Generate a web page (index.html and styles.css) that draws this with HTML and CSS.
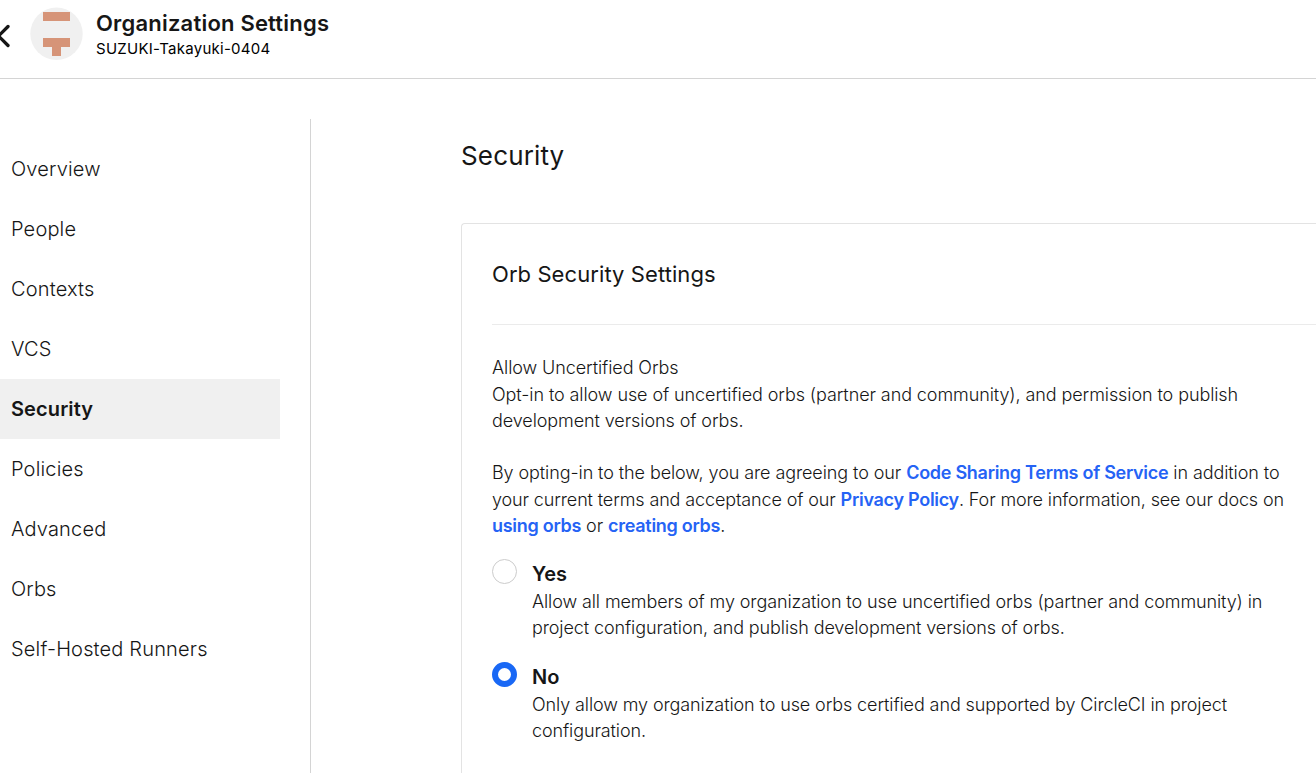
FILE: index.html
```html
<!DOCTYPE html>
<html lang="en">
<head>
<meta charset="utf-8">
<title>Organization Settings</title>
<link rel="stylesheet" href="styles.css">
</head>
<body>
<header class="topbar">
  <svg class="back" width="12" height="28" viewBox="0 0 12 28" fill="none" stroke="#161616" stroke-width="3.3" stroke-linecap="round"><path d="M8 4.5L-1.5 14L8 23.5"/></svg>
  <svg class="avatar" width="53" height="53" viewBox="0 0 53 53"><circle cx="26.5" cy="26.8" r="26.2" fill="#f0f0f0"/><path fill="#d69478" d="M13 5h27v9H13zM13 31h27v9h-9v9h-9v-9h-9z"/></svg>
  <div class="org">
    <h1 class="org-title">Organization Settings</h1>
    <div class="org-name">SUZUKI-Takayuki-0404</div>
  </div>
</header>
<div class="layout">
  <nav class="sidebar">
    <a class="item">Overview</a>
    <a class="item">People</a>
    <a class="item">Contexts</a>
    <a class="item">VCS</a>
    <a class="item active">Security</a>
    <a class="item">Policies</a>
    <a class="item">Advanced</a>
    <a class="item">Orbs</a>
    <a class="item">Self-Hosted Runners</a>
  </nav>
  <main class="content">
    <h2 class="page-title">Security</h2>
    <section class="card">
      <h3 class="card-title">Orb Security Settings</h3>
      <div class="copy">
        <p class="lead">Allow Uncertified Orbs</p>
        <p>Opt-in to allow use of uncertified orbs (partner and community), and permission to publish<br>development versions of orbs.</p>
        <p class="terms">By opting-in to the below, you are agreeing to our <a class="link">Code Sharing Terms of Service</a> in addition to<br><span class="snug">your current terms and acceptance of our <a class="link">Privacy Policy</a>. For more information, see our docs on</span><br><a class="link">using orbs</a> or <a class="link">creating orbs</a>.</p>
      </div>
      <div class="option">
        <span class="radio"></span>
        <div><div class="option-title">Yes</div><p>Allow all members of my organization to use uncertified orbs (partner and community) in<br>project configuration, and publish development versions of orbs.</p></div>
      </div>
      <div class="option">
        <span class="radio checked"></span>
        <div><div class="option-title">No</div><p>Only allow my organization to use orbs certified and supported by CircleCI in project<br>configuration.</p></div>
      </div>
    </section>
  </main>
</div>
</body>
</html>
```
FILE: styles.css
```css
* { box-sizing: border-box; }
body { margin: 0; height: 773px; overflow: hidden; background: #fff; color: #161616; font-family: Inter, "Liberation Sans", sans-serif; white-space: nowrap; }
h1, h2, h3, p { margin: 0; }
.topbar { display: flex; height: 79px; border-bottom: 1px solid #d4d4d4; }
.back { margin-top: 22px; }
.avatar { margin: 7px 0 0 18px; }
.org { margin: 10px 0 0 13px; }
.org-title { font-size: 22px; line-height: 27px; font-weight: 600; letter-spacing: .2px; }
.org-name { color: #000; font-size: 15px; line-height: 24px; letter-spacing: .27px; }
.layout { display: flex; height: 694px; }
.sidebar { flex: none; width: 311px; margin-top: 40px; padding-top: 20px; border-right: 1px solid #d4d4d4; }
.item { display: block; width: 280px; height: 60px; padding-left: 11px; font-size: 20px; line-height: 60px; font-weight: 300; letter-spacing: .17px; }
.active { background: #f0f0f0; font-weight: 600; letter-spacing: .1px; }
.content { flex: 1; min-width: 0; display: flex; flex-direction: column; padding: 61px 0 0 150px; }
.page-title { font-size: 26px; line-height: 32px; font-weight: 400; letter-spacing: .15px; }
.card { flex: 1; margin-top: 51px; padding-left: 30px; border: solid #e3e3e3; border-width: 1px 0 0 1px; border-radius: 4px 0 0 0; }
.card-title { height: 101px; padding-top: 36px; border-bottom: 1px solid #ebebeb; font-size: 22px; line-height: 28px; font-weight: 400; letter-spacing: .08px; }
.copy { padding-top: 30px; }
.card p { font-size: 18px; line-height: 26px; font-weight: 300; letter-spacing: -.09px; }
.card .lead { margin-bottom: 1px; }
.card .terms { margin-top: 26.2px; line-height: 26.4px; }
.snug { letter-spacing: -.125px; }
.link { color: #2563f5; font-weight: 600; letter-spacing: -.28px; }
.option { display: flex; gap: 15px; margin-top: 20px; }
.option + .option { margin-top: 20.8px; }
.card .option p { letter-spacing: -.105px; }
.radio { width: 25px; height: 25px; border: 1px solid #ccc; border-radius: 50%; }
.checked { border: 6px solid #1968f5; }
.option-title { height: 30px; font-size: 20px; line-height: 30px; font-weight: 600; }
```
